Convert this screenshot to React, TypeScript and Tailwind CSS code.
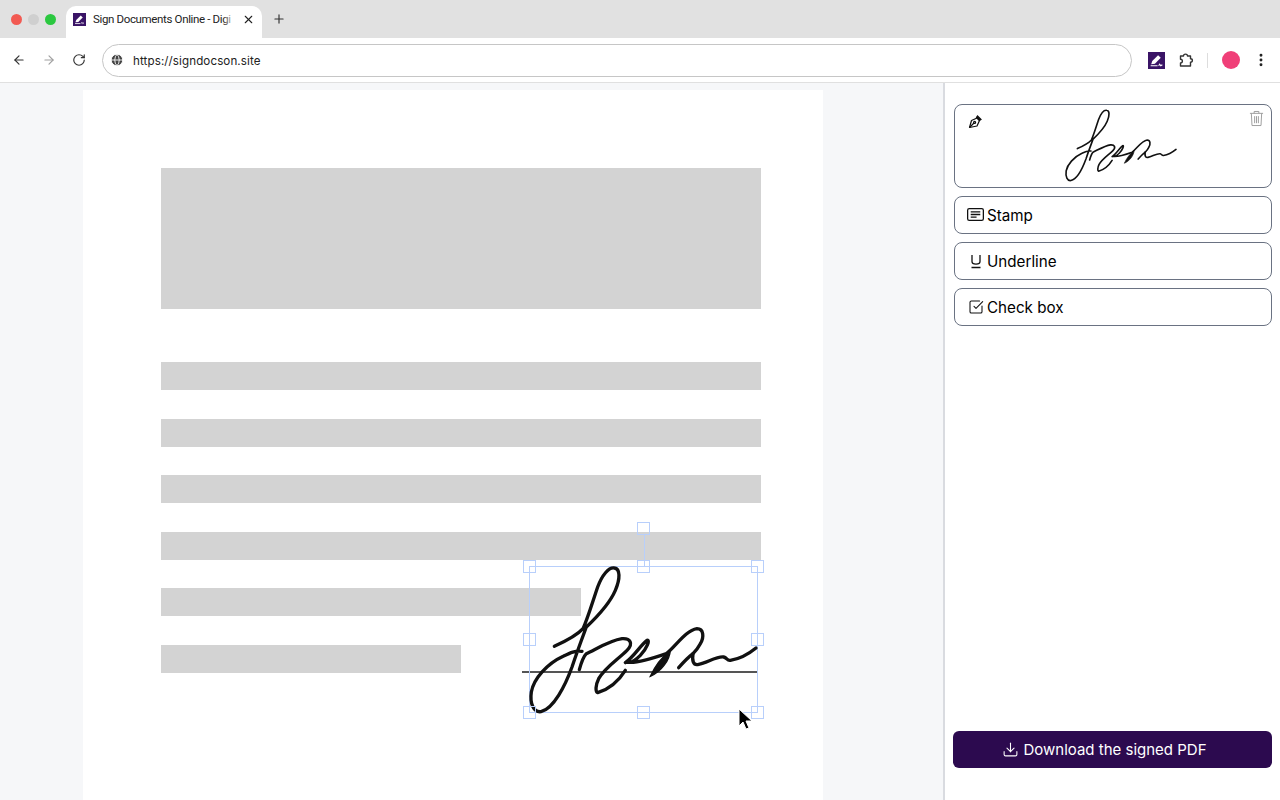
import { ArrowLeft, ArrowRight, Download, Globe, MoreVertical, Plus, RotateCw, SquareCheckBig, X } from "lucide-react";

const signaturePaths = [
  "M132 393 C165 378 200 360 218 340 C232 310 245 265 262 215 C275 180 295 155 312 158 C330 160 330 190 315 225 C300 260 265 300 228 335 C215 370 200 410 185 455 C165 510 130 580 92 589 C70 592 58 565 63 530 C70 490 110 445 160 422 C180 412 195 405 215 408",
  "M207 463 C212 445 218 425 228 415 C260 400 300 375 335 370 C360 368 370 385 350 405 C320 435 285 455 265 490 C255 510 255 530 262 532 C285 525 320 505 345 465",
  "M345 442 C370 425 390 390 410 375 C420 372 410 400 390 420 C375 435 360 445 348 440 C370 445 420 432 468 415 C495 395 525 345 560 340 C580 340 582 365 570 385 C562 400 555 408 548 415",
  "M505 457 C520 440 535 425 548 415 C545 435 548 452 565 447 C590 442 620 422 640 425 C650 427 650 437 660 435 C680 432 710 420 737 398",
];

function Signature({ className }: { className: string }) {
  return (
    <svg viewBox="62 158 675 432" className={className} fill="none" overflow="visible">
      {signaturePaths.map((d) => (
        <path key={d} d={d} stroke="#111" strokeWidth="10" strokeLinecap="round" strokeLinejoin="round" />
      ))}
      <path d="M420 483 C435 450 455 425 480 405 C478 435 452 470 420 483Z" fill="#111" stroke="#111" strokeWidth="4" />
    </svg>
  );
}

function AppLogo({ className }: { className: string }) {
  return (
    <svg viewBox="0 0 16 16" className={className}>
      <rect width="16" height="16" fill="#3a1466" />
      <path d="M3 11.5 L4 8.5 L9.5 3 L12 5.5 L6.5 11 Z" fill="#fff" />
      <path d="M2.5 13 H9 M10 13 L11 11.5 L12 13 L13.5 12" stroke="#fff" strokeWidth="1" fill="none" />
    </svg>
  );
}

function ToolButton({ icon, label }: { icon: React.ReactNode; label: string }) {
  return (
    <div className="flex h-[37.5px] items-center rounded-lg border border-gray-500 pl-3 text-[15.2px] text-black">
      <span className="mr-[3px] flex w-[17px] justify-center">{icon}</span>
      <span className="pt-[3px]">{label}</span>
    </div>
  );
}

function Handle({ className }: { className: string }) {
  return <div className={`absolute h-[13px] w-[13px] border-[1.5px] border-[#b8cffb] ${className}`} />;
}

export default function App() {
  const bars = ["w-full", "w-full", "w-full", "w-full", "w-[420px]", "w-[300px]"];

  return (
    <div className="flex h-[800px] w-[1280px] flex-col overflow-hidden bg-white font-['Inter',sans-serif]">
      {/* Browser tab strip */}
      <div className="flex h-[38px] items-end bg-[#e1e1e1] pl-[10.5px]">
        <div className="mb-[13.5px] flex gap-[6px]">
          <span className="h-[11px] w-[11px] rounded-full bg-[#f25a52]" />
          <span className="h-[11px] w-[11px] rounded-full bg-[#cfcfcf]" />
          <span className="h-[11px] w-[11px] rounded-full bg-[#2bc840]" />
        </div>
        <div className="ml-[10.5px] flex h-[32px] w-[196px] items-center rounded-t-[10px] bg-white pb-[5px] pl-[7px]">
          <AppLogo className="h-[13px] w-[13px]" />
          <div className="relative ml-[7px] w-[142px] whitespace-nowrap font-['Roboto',sans-serif] text-[11.5px] tracking-[-0.35px] text-[#222]">
            Sign Documents Online - Digi
            <div className="absolute inset-y-0 right-0 w-3 bg-gradient-to-r from-transparent to-white" />
          </div>
          <X className="ml-[7px] h-[13px] w-[13px] text-[#222]" strokeWidth={2} />
        </div>
        <Plus className="mb-[12px] ml-[10px] h-[14px] w-[14px] text-[#333]" strokeWidth={2} />
      </div>

      {/* Browser toolbar */}
      <div className="flex h-[45px] items-center rounded-t-[9px] border-b border-[#e0e0e0] bg-white pl-[12px]">
        <ArrowLeft className="h-[14px] w-[14px] text-[#333]" strokeWidth={2} />
        <ArrowRight className="ml-[16px] h-[14px] w-[14px] text-[#a0a0a0]" strokeWidth={2} />
        <RotateCw className="ml-[16px] h-[14px] w-[14px] text-[#333]" strokeWidth={2} />
        <div className="ml-[16px] flex h-[33px] w-[1030px] items-center rounded-full border-[1.5px] border-[#c6c6c6] pl-[7px] text-[11.6px] tracking-[0.1px] text-[#222]">
          <Globe className="h-[14px] w-[14px] fill-[#444] text-white" strokeWidth={1.5} />
          <span className="ml-[9px] pt-[3px]">https://signdocson.site</span>
        </div>
        <AppLogo className="ml-[16px] h-[17px] w-[17px]" />
        <svg viewBox="0 0 16 16" className="ml-[13px] h-[16px] w-[16px]" fill="none" stroke="#333" strokeWidth="1.4" strokeLinejoin="round">
          <path d="M2.5 4 H5.5 C5.5 1.5 9.5 1.5 9.5 4 H12.5 V6.8 C15 6.8 15 10.2 12.5 10.2 V14 H2.5 V11 C5 11 5 7.2 2.5 7.2 Z" />
        </svg>
        <span className="ml-[13px] h-[15px] w-px bg-[#ddd]" />
        <span className="ml-[14px] h-[18px] w-[18px] rounded-full bg-[#f03f78]" />
        <MoreVertical className="ml-[13px] h-[16px] w-[16px] text-[#222]" strokeWidth={2.4} />
      </div>

      <div className="flex min-h-0 flex-1">
        {/* Document viewer */}
        <div className="w-[943px] bg-[#f6f7f9] pl-[83px] pt-[7px]">
          <div className="relative h-[720px] w-[740px] bg-white pl-[78px] pr-[62px] pt-[78px]">
            <div className="h-[141px] bg-[#d3d3d3]" />
            <div className="mt-[53px] flex flex-col gap-[28.5px]">
              {bars.map((width, i) => (
                <div key={i} className={`h-[28px] bg-[#d3d3d3] ${width}`} />
              ))}
            </div>

            {/* Signature placed on the page */}
            <div className="absolute left-[439px] top-[581px] h-[2px] w-[235px] bg-[#555]" />
            <div className="absolute left-[446px] top-[476px] h-[147px] w-[229px] border border-[#b8cffb]">
              <Signature className="absolute left-[1px] top-[1px] h-[144px] w-[225px]" />
              <div className="absolute -top-[32px] left-[114px] h-[32px] w-px bg-[#b8cffb]" />
              <Handle className="-top-[45px] left-[107px]" />
              <Handle className="-left-[7px] -top-[7px]" />
              <Handle className="-top-[7px] left-[107px]" />
              <Handle className="-right-[7px] -top-[7px]" />
              <Handle className="-left-[7px] top-[66px]" />
              <Handle className="-right-[7px] top-[66px]" />
              <Handle className="-bottom-[7px] -left-[7px]" />
              <Handle className="-bottom-[7px] left-[107px]" />
              <Handle className="-bottom-[7px] -right-[7px]" />
              <svg viewBox="0 0 16 24" className="absolute left-[208px] top-[141px] h-[24px] w-[16px]">
                <path d="M1 1 V18 L5 14 L8 21 L11 20 L8 13 L14 13 Z" fill="#000" stroke="#fff" strokeWidth="1" />
              </svg>
            </div>
          </div>
        </div>

        {/* Tools sidebar */}
        <aside className="flex w-[337px] flex-col border-l-2 border-[#d9dbe0] bg-white pb-[32px] pl-[9px] pr-[8px] pt-[21px]">
          <div className="relative flex h-[84px] justify-center rounded-lg border border-gray-500 pt-[5px]">
            <svg viewBox="0 0 16 16" className="absolute left-[13px] top-[8px] h-[16px] w-[16px]" fill="none" stroke="#111" strokeWidth="1.2">
              <path d="M1.5 14.5 L3.5 7.5 L9 5 L11.5 7.5 L9 13 Z" strokeLinejoin="round" />
              <path d="M1.5 14.5 L6 10" />
              <circle cx="6.6" cy="9.4" r="1" />
              <path d="M9.5 3 L13 6.5 L11.5 7.5 L8.5 4.5 Z" fill="#111" />
            </svg>
            <svg viewBox="0 0 16 18" className="absolute right-[7px] top-[5px] h-[17px] w-[15px]" fill="none" stroke="#9a9a9a" strokeWidth="1">
              <path d="M1 3.5 H15 M5.5 3.5 V1.5 H10.5 V3.5" />
              <path d="M2.5 3.5 L3.2 16.5 H12.8 L13.5 3.5" />
              <path d="M6 6.5 V14 M8 6.5 V14 M10 6.5 V14" />
            </svg>
            <Signature className="ml-[15px] h-[71px] w-[110px]" />
          </div>

          <div className="mt-2 flex flex-col gap-[8.5px]">
            <ToolButton
              label="Stamp"
              icon={
                <svg viewBox="0 0 16 16" className="h-[17px] w-[17px]" fill="none" stroke="#111" strokeWidth="1.2">
                  <rect x="0.6" y="2.5" width="14.8" height="11" rx="1.5" />
                  <path d="M3.5 5.5 H12.5 M3.5 8 H12.5 M3.5 10.5 H9" />
                </svg>
              }
            />
            <ToolButton
              label="Underline"
              icon={
                <svg viewBox="0 0 16 16" className="h-[16px] w-[16px]" fill="none" stroke="#111" strokeWidth="1.3">
                  <path d="M4 2 V8.5 C4 12 12 12 12 8.5 V2 M3.5 14.5 H12.5" />
                </svg>
              }
            />
            <ToolButton label="Check box" icon={<SquareCheckBig className="h-[16px] w-[16px] text-[#111]" strokeWidth={1.6} />} />
          </div>

          <button className="-ml-px mt-auto flex h-[37px] items-center justify-center gap-1 rounded-md bg-[#2c0a4f] pr-[16px] text-[15px] text-white">
            <Download className="h-[17px] w-[17px]" strokeWidth={1.5} />
            <span className="pt-[2px]">Download the signed PDF</span>
          </button>
        </aside>
      </div>
    </div>
  );
}
